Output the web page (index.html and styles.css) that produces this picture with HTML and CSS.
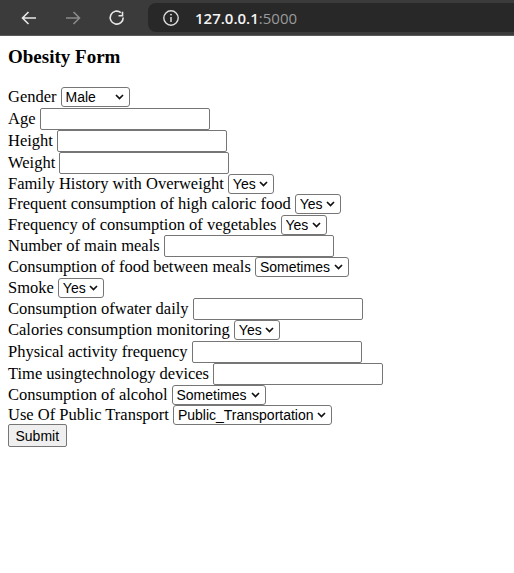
FILE: index.html
```html
<!DOCTYPE html>
<html>
<head>
<meta charset="utf-8">
<link rel="stylesheet" href="styles.css">
</head>
<body>
<div class="chrome">
  <div class="nav">
    <svg class="navicon" width="20" height="20" viewBox="0 0 20 20"><path d="M17 10H3.5M9.5 4L3.5 10l6 6" fill="none" stroke="#e8e8e8" stroke-width="1.6"/></svg>
    <svg class="navicon dim" width="20" height="20" viewBox="0 0 20 20"><path d="M3 10h13.5M10.5 4l6 6-6 6" fill="none" stroke="#8a8a8a" stroke-width="1.6"/></svg>
    <svg class="navicon" width="20" height="20" viewBox="0 0 20 20"><path d="M16.2 9.5A6.5 6.5 0 1 1 13.8 4.6" fill="none" stroke="#e8e8e8" stroke-width="1.6"/><path d="M11.5 7.8h4v-4" fill="none" stroke="#e8e8e8" stroke-width="1.6"/></svg>
  </div>
  <div class="omnibox">
    <svg class="info" width="18" height="18" viewBox="0 0 18 18"><circle cx="9" cy="9" r="7.2" fill="none" stroke="#dcdcdc" stroke-width="1.4"/><path d="M9 8v5" stroke="#dcdcdc" stroke-width="1.5"/><circle cx="9" cy="5.6" r="0.95" fill="#dcdcdc"/></svg>
    <span class="host">127.0.0.1</span><span class="port">:5000</span>
  </div>
</div>
<div class="page">
  <h3 class="title">Obesity Form</h3>
  <form class="form">
    <div class="row sel">Gender <select class="sel-gender"><option>Male</option><option>Female</option></select></div>
    <div class="row txt">Age <input type="text"></div>
    <div class="row txt">Height <input type="text"></div>
    <div class="row txt">Weight <input type="text"></div>
    <div class="row sel">Family History with Overweight <select><option>Yes</option><option>No</option></select></div>
    <div class="row sel">Frequent consumption of high caloric food <select><option>Yes</option><option>No</option></select></div>
    <div class="row sel">Frequency of consumption of vegetables <select><option>Yes</option><option>No</option></select></div>
    <div class="row txt">Number of main meals <input type="text"></div>
    <div class="row sel">Consumption of food between meals <select><option>Sometimes</option><option>Frequently</option><option>Always</option><option>no</option></select></div>
    <div class="row sel">Smoke <select><option>Yes</option><option>No</option></select></div>
    <div class="row txt">Consumption ofwater daily <input type="text"></div>
    <div class="row sel">Calories consumption monitoring <select><option>Yes</option><option>No</option></select></div>
    <div class="row txt">Physical activity frequency <input type="text"></div>
    <div class="row txt">Time usingtechnology devices <input type="text"></div>
    <div class="row sel">Consumption of alcohol <select><option>Sometimes</option><option>Frequently</option><option>Always</option><option>no</option></select></div>
    <div class="row sel">Use Of Public Transport <select><option>Public_Transportation</option><option>Walking</option><option>Automobile</option><option>Motorbike</option><option>Bike</option></select></div>
    <div class="row btn"><input class="submit" type="submit" value="Submit"></div>
  </form>
</div>
</body>
</html>
```
FILE: styles.css
```css
html, body {
  margin: 0;
  padding: 0;
  background: #ffffff;
}
.chrome {
  height: 35px;
  background: #3b3b3b;
  border-bottom: 1px solid #5a5a5a;
  display: flex;
  align-items: center;
  font-family: "Open Sans", "Noto Sans", sans-serif;
}
.nav {
  display: flex;
  align-items: center;
  gap: 24px;
  padding-left: 19px;
  width: 129px;
}
.navicon { display: block; }
.omnibox {
  flex: 1;
  align-self: stretch;
  margin: 3px 0 3px 0;
  background: #282828;
  border-radius: 8px 0 0 8px;
  display: flex;
  align-items: center;
  padding-left: 14px;
  font-size: 15px;
}
.info { margin-right: 15px; }
.host { color: #f4f4f4; font-weight: 600; }
.port { color: #9a9a9a; }
.page {
  padding: 8px;
  font-family: "Liberation Serif", "Times New Roman", serif;
  font-size: 16.5px;
  color: #000;
}
.title {
  margin: 2px 0 19px;
  font-size: 19px;
  line-height: 22px;
  font-weight: bold;
}
.row {
  display: flex;
  align-items: center;
  gap: 4px;
  white-space: nowrap;
}
.row.sel { height: 20.5px; }
.row.txt { height: 22px; }
.row.btn { height: 23px; margin-top: -1.5px; }
.form input, .form select {
  font-family: "Liberation Sans", Arial, sans-serif;
  font-size: 14px;
  color: #000;
  margin: 0;
}
.form select {
  -webkit-appearance: none;
  appearance: none;
  height: 20px;
  box-sizing: border-box;
  border: 1px solid #767676;
  border-radius: 3px;
  padding: 0 17px 0 4px;
  background-color: #fff;
  background-image: url("data:image/svg+xml;utf8,<svg xmlns='http://www.w3.org/2000/svg' width='9' height='6' viewBox='0 0 9 6'><path d='M1 1l3.5 3.5L8 1' fill='none' stroke='%23111' stroke-width='1.7'/></svg>");
  background-repeat: no-repeat;
  background-position: right 5px center;
  background-size: 9px 6px;
  line-height: 18px;
}
.form input[type="text"] {
  box-sizing: border-box;
  width: 170px;
  height: 22px;
  border: 1px solid #767676;
  border-radius: 2px;
  padding: 1px 2px;
  background: #fff;
}
.form .sel-gender { width: 69px; }
.form .submit {
  height: 23px;
  padding: 1px 6.5px;
  border: 1px solid #767676;
  border-radius: 2px;
  background: #efefef;
  box-sizing: border-box;
}
```
